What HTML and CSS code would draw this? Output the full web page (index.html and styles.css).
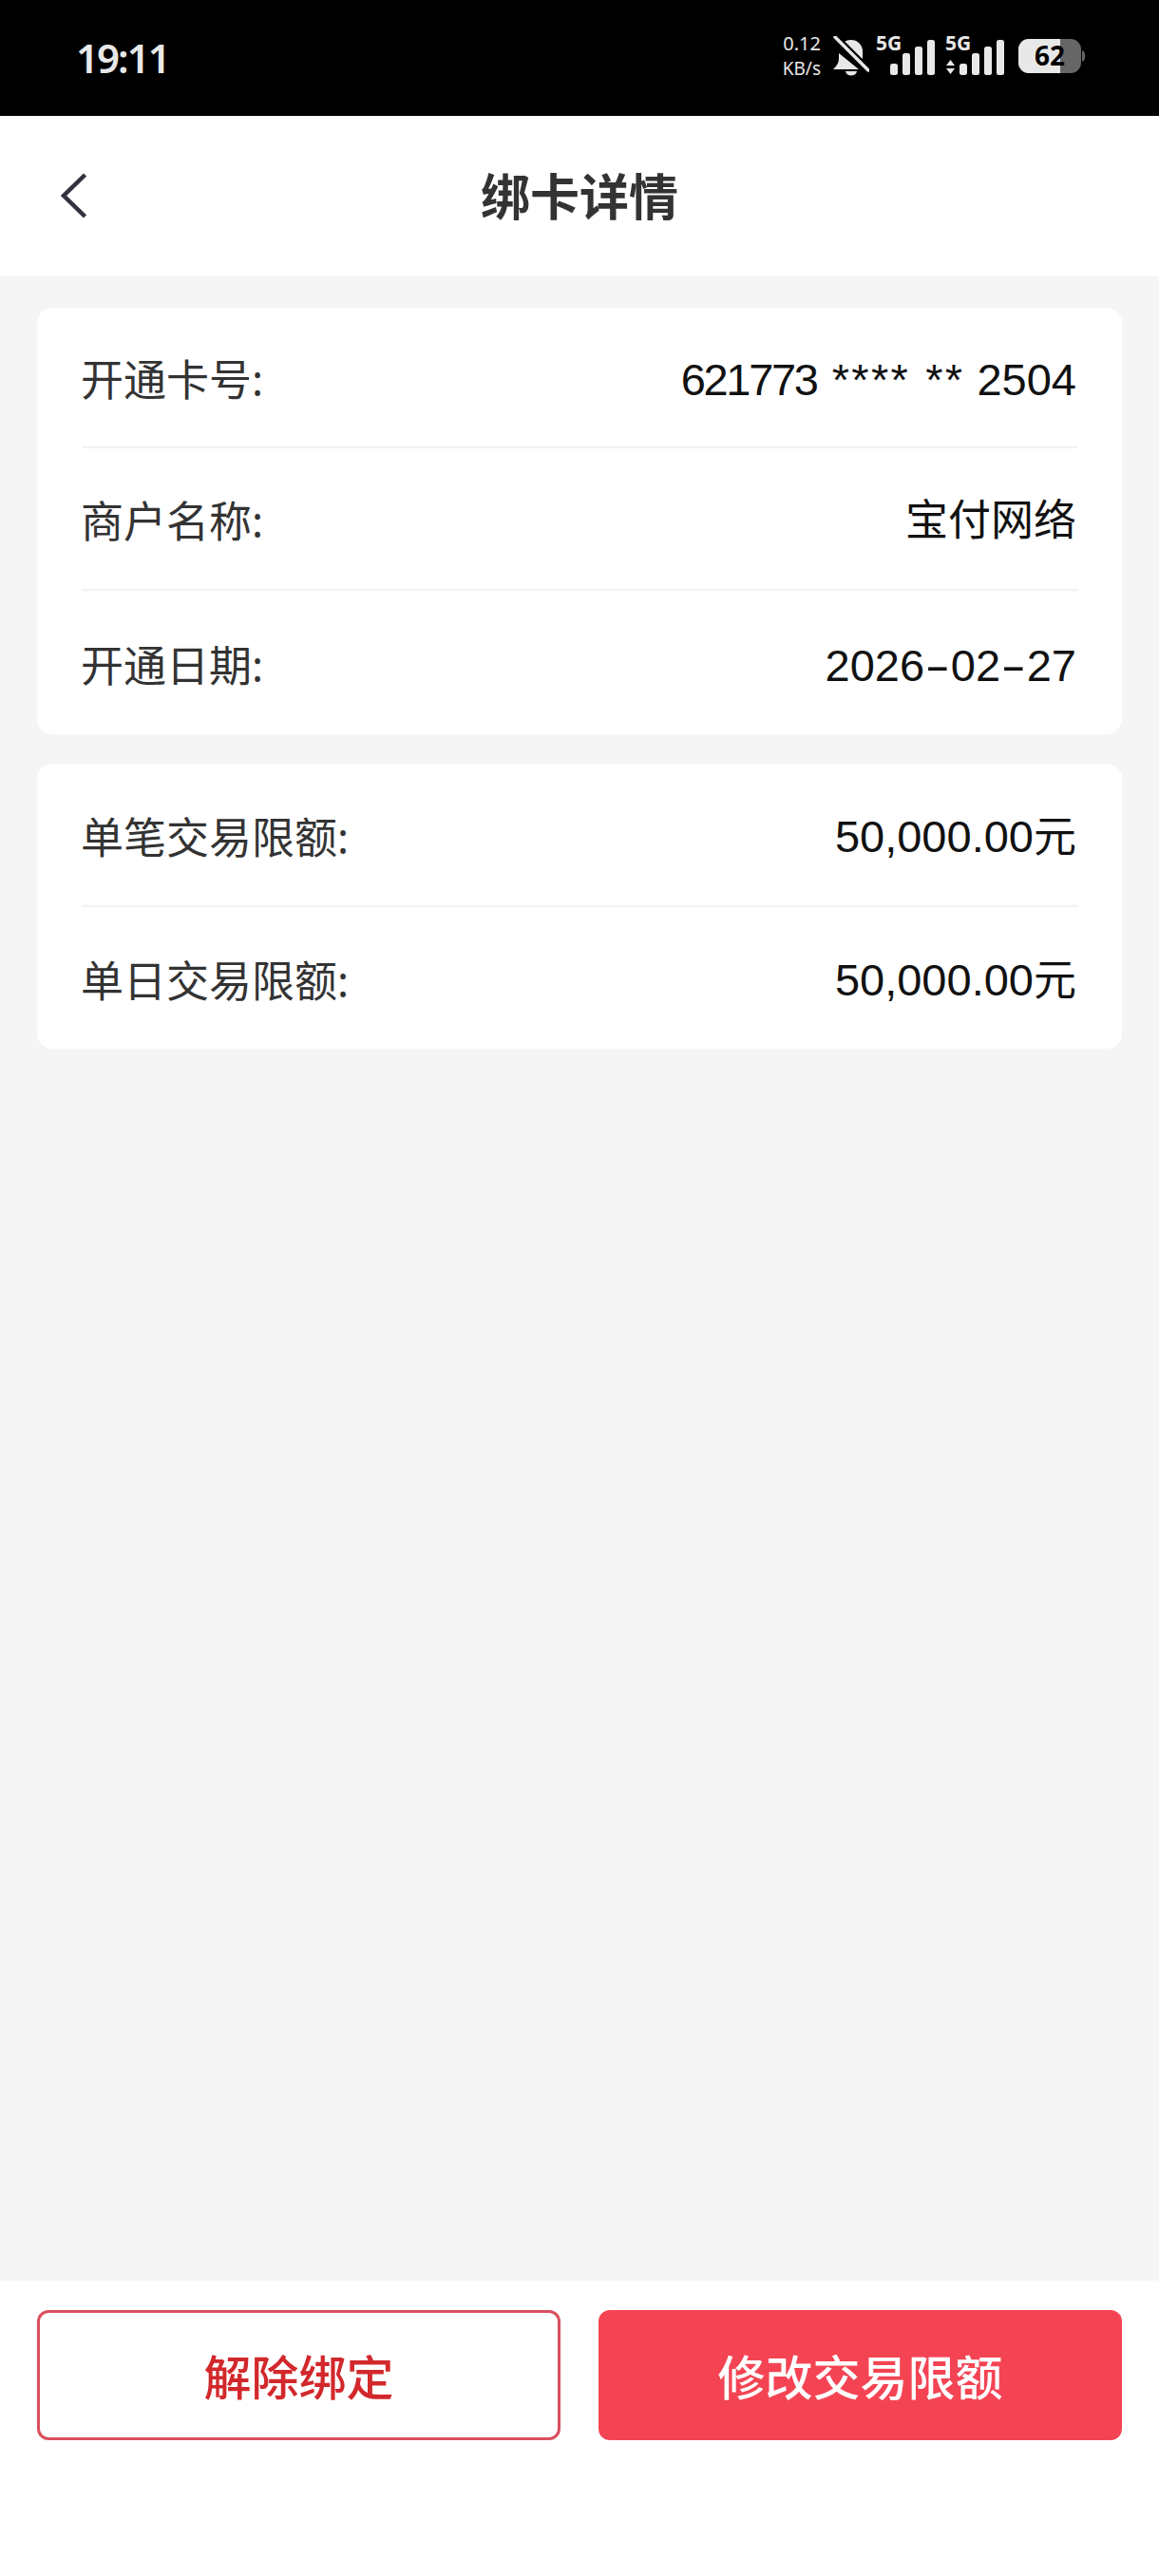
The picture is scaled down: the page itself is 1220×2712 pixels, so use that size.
FILE: index.html
```html
<!DOCTYPE html>
<html lang="zh-CN">
<head>
    <meta charset="UTF-8">
    <meta name="viewport" content="width=device-width, initial-scale=1.0">
    <title>绑卡详情</title>
    <link rel="stylesheet" href="styles.css">
</head>
<body>
    <div class="status-bar">
        <div class="time">19:11</div>
        <div class="status-icons">
            <div class="speed"><span>0.12</span><span class="speed-unit">KB/s</span></div>
            <svg class="bell" width="38" height="42" viewBox="0 0 38 42">
                <path d="M7 12 A12 12 0 0 1 19 4 A12 12 0 0 1 31 15 V24 Z" fill="#e8e8e8"/>
                <path d="M6 18 L27 35 H0 C4 31 6 28 6 24 Z" fill="#e8e8e8"/>
                <path d="M30 29 L35 35 H33 Z" fill="#e8e8e8"/>
                <path d="M13 37 H25 C24 43 14 43 13 37 Z" fill="#e8e8e8"/>
                <path d="M2 1 L37 36" stroke="#000" stroke-width="8"/>
                <path d="M2 1 L37 36" stroke="#e8e8e8" stroke-width="3.5" stroke-linecap="round"/>
            </svg>
            <svg class="signal" width="62" height="56" viewBox="0 -7 62 56">
                <text class="net" x="0" y="15">5G</text>
                <rect x="15" y="29" width="8" height="12" rx="2.5" fill="#e8e8e8"/>
                <rect x="28" y="18" width="8" height="23" rx="2.5" fill="#e8e8e8"/>
                <rect x="41" y="11" width="8" height="30" rx="2.5" fill="#e8e8e8"/>
                <rect x="54" y="4" width="8" height="37" rx="2.5" fill="#e8e8e8"/>
            </svg>
            <svg class="signal" width="62" height="56" viewBox="0 -7 62 56">
                <text class="net" x="0" y="15">5G</text>
                <path d="M1 31 L5.5 25 L10 31 Z M1 34 H10 L5.5 40 Z" fill="#e8e8e8"/>
                <rect x="15" y="29" width="8" height="12" rx="2.5" fill="#e8e8e8"/>
                <rect x="28" y="18" width="8" height="23" rx="2.5" fill="#e8e8e8"/>
                <rect x="41" y="11" width="8" height="30" rx="2.5" fill="#e8e8e8"/>
                <rect x="54" y="4" width="8" height="37" rx="2.5" fill="#e8e8e8"/>
            </svg>
            <svg class="battery" width="70" height="44" viewBox="0 -4 70 44">
                <rect x="0" y="0" width="66" height="36" rx="11" fill="#666"/>
                <path d="M11 0 H44 V36 H11 A11 11 0 0 1 0 25 V11 A11 11 0 0 1 11 0 Z" fill="#e8e8e8"/>
                <path d="M67 12 C69 13 70 14 70 18 C70 22 69 23 67 24 Z" fill="#666"/>
                <text class="level" x="33" y="28" text-anchor="middle">62</text>
            </svg>
        </div>
    </div>

    <div class="nav">
        <svg class="back" width="27" height="48" viewBox="0 0 27 48">
            <path d="M25.5 2 L3 24 L25.5 46" fill="none" stroke="#33333f" stroke-width="4.5"/>
        </svg>
        <h1>绑卡详情</h1>
    </div>

    <div class="content">
        <div class="card card-info">
            <div class="row">
                <span class="label">开通卡号:</span>
                <span class="value"><span class="card-prefix">621773</span> <span class="mask">****</span> <span class="mask">**</span> 2504</span>
            </div>
            <div class="row">
                <span class="label">商户名称:</span>
                <span class="value cjk">宝付网络</span>
            </div>
            <div class="row">
                <span class="label">开通日期:</span>
                <span class="value">2026<span class="dash">-</span>02<span class="dash">-</span>27</span>
            </div>
        </div>
        <div class="card">
            <div class="row">
                <span class="label">单笔交易限额:</span>
                <span class="value">50,000.00<span class="cjk">元</span></span>
            </div>
            <div class="row">
                <span class="label">单日交易限额:</span>
                <span class="value">50,000.00<span class="cjk">元</span></span>
            </div>
        </div>
    </div>

    <div class="footer">
        <button class="btn btn-outline">解除绑定</button>
        <button class="btn btn-primary">修改交易限额</button>
    </div>
</body>
</html>
```

FILE: styles.css
```css
* {
    box-sizing: border-box;
}

body {
    font-family: "Noto Sans", "Noto Sans CJK SC", sans-serif;
    display: flex;
    flex-direction: column;
    height: 2712px;
    margin: 0;
    background-color: #f5f5f5;
}

.status-bar {
    display: flex;
    justify-content: space-between;
    align-items: center;
    height: 122px;
    padding: 0 78px 0 80px;
    background-color: #000;
    color: #e8e8e8;
}

.time {
    font-size: 42px;
    font-weight: 600;
    letter-spacing: -2px;
    margin-top: -2px;
}

.status-icons {
    display: flex;
    align-items: center;
    margin-top: -4px;
}

.speed {
    display: flex;
    flex-direction: column;
    align-items: flex-end;
    font-size: 20px;
    line-height: 26px;
    margin-right: 13px;
}

.speed-unit {
    font-size: 19px;
}

.bell {
    margin-right: 7px;
}

.signal {
    margin-right: 11px;
}

.battery {
    margin-left: 4px;
}

.net {
    font-family: "Noto Sans", sans-serif;
    font-size: 21px;
    font-weight: 700;
    fill: #e8e8e8;
}

.level {
    font-family: "Noto Sans", sans-serif;
    font-size: 28px;
    font-weight: 700;
    fill: #000;
}

.nav {
    position: relative;
    display: flex;
    justify-content: center;
    align-items: center;
    height: 169px;
    padding-bottom: 5px;
    background-color: white;
}

.back {
    position: absolute;
    left: 64px;
    top: 60px;
}

h1 {
    margin: 0;
    font-size: 52px;
    font-weight: 700;
    color: #333;
}

.content {
    flex: 1;
    display: flex;
    flex-direction: column;
    gap: 31px;
    padding: 33px 39px 0;
}

.card {
    padding: 0 46px 0 47px;
    background: white;
    border-radius: 16px;
}

.row {
    display: flex;
    justify-content: space-between;
    align-items: center;
    height: 150px;
    padding-top: 6px;
    border-top: 2px solid #f2f2f2;
}

.row:first-child {
    height: 149px;
    border-top: none;
}

.row:last-child {
    height: 151px;
}

.card-info .row:first-child {
    height: 146px;
}

.card-info .row:last-child {
    height: 153px;
}

.label {
    font-size: 45px;
    line-height: 60px;
    margin-left: -1px;
    color: #333;
}

.value {
    font-family: "Liberation Sans", "Noto Sans CJK SC", sans-serif;
    font-size: 47px;
    line-height: 60px;
    margin-right: 2px;
    color: #111;
}

.cjk {
    font-size: 45px;
}

.card-prefix {
    letter-spacing: -2.3px;
}

.mask {
    margin-left: 3px;
    letter-spacing: 2.3px;
}

.dash {
    display: inline-block;
    margin: 0 6px;
    transform: scaleX(1.7);
}

.footer {
    display: flex;
    justify-content: space-between;
    height: 311px;
    padding: 31px 39px 0;
    background-color: white;
}

.btn {
    width: 551px;
    height: 137px;
    font-family: inherit;
    font-size: 50px;
    font-weight: 500;
    border-radius: 12px;
}

.btn-outline {
    background-color: white;
    border: 3px solid #d9505f;
    color: #d2282c;
}

.btn-primary {
    background-color: #f44454;
    border: none;
    color: white;
}
```
